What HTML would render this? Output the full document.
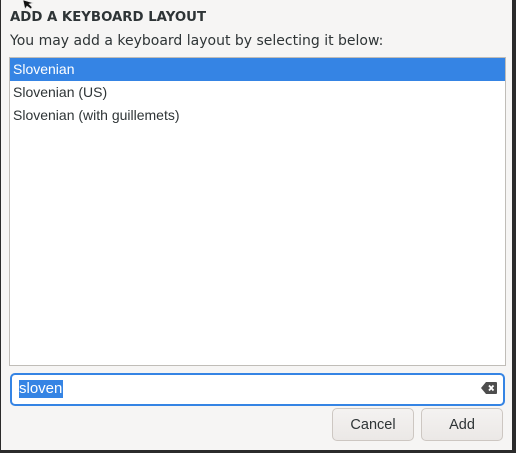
<!DOCTYPE html>
<html><head><style>
body{margin:0;width:516px;height:453px;background:#2b2b2b;position:relative;overflow:hidden;font-family:"DejaVu Sans","Liberation Sans",sans-serif;}
#d{position:absolute;left:1px;top:0;width:511px;height:450px;background:#f6f5f4;}
.t{position:absolute;left:9px;top:10px;font-size:13.3px;font-weight:bold;color:#2e3436;}
.s{position:absolute;left:9px;top:33px;font-size:14px;color:#2e3436;}
.l{position:absolute;left:8px;top:57px;width:495px;height:307px;background:#fff;border:1px solid #c0bdb8;}
.r{height:23px;line-height:23px;padding-left:3px;font-size:14px;font-family:"Liberation Sans",sans-serif;color:#2e3436;}
.r.sel{background:#3584e4;color:#fff;}
.e{position:absolute;left:9px;top:373px;width:491px;height:29px;border:2px solid #3584e4;border-radius:5px;background:#fff;}
.e span{position:absolute;left:7px;top:5px;height:18px;line-height:18px;background:#3584e4;color:#fff;font-size:15px;font-family:"Liberation Sans",sans-serif;padding-right:1px;}
.b{position:absolute;top:408px;width:82px;height:33px;border:1px solid #cdc7c2;border-radius:5px;background:linear-gradient(#f4f2f1,#ebe8e6);font-size:14.5px;font-family:"Liberation Sans",sans-serif;color:#2e3436;text-align:center;line-height:32px;box-sizing:border-box;}
</style></head><body>
<div id="d">
<svg style="position:absolute;left:21px;top:0" width="14" height="10"><path d="M1 0 L3 9 L5 6 L9 9 L10 7 L7 4 L11 3 Z" fill="#111" stroke="#ddd" stroke-width="0.6"/></svg>
<div class="t">ADD A KEYBOARD LAYOUT</div>
<div class="s">You may add a keyboard layout by selecting it below:</div>
<div class="l">
<div class="r sel">Slovenian</div>
<div class="r">Slovenian (US)</div>
<div class="r">Slovenian (with guillemets)</div>
</div>
<div class="e"><span>sloven</span>
<svg style="position:absolute;right:6px;top:7px" width="16" height="12"><path d="M5 0 H15 Q16 0 16 1 V11 Q16 12 15 12 H5 L0 6 Z" fill="#4d4d4d"/><path d="M8 3.5 L12.5 8.5 M12.5 3.5 L8 8.5" stroke="#fff" stroke-width="1.8"/></svg>
</div>
<div class="b" style="left:331px">Cancel</div>
<div class="b" style="left:420px">Add</div>
</div>
</body></html>
